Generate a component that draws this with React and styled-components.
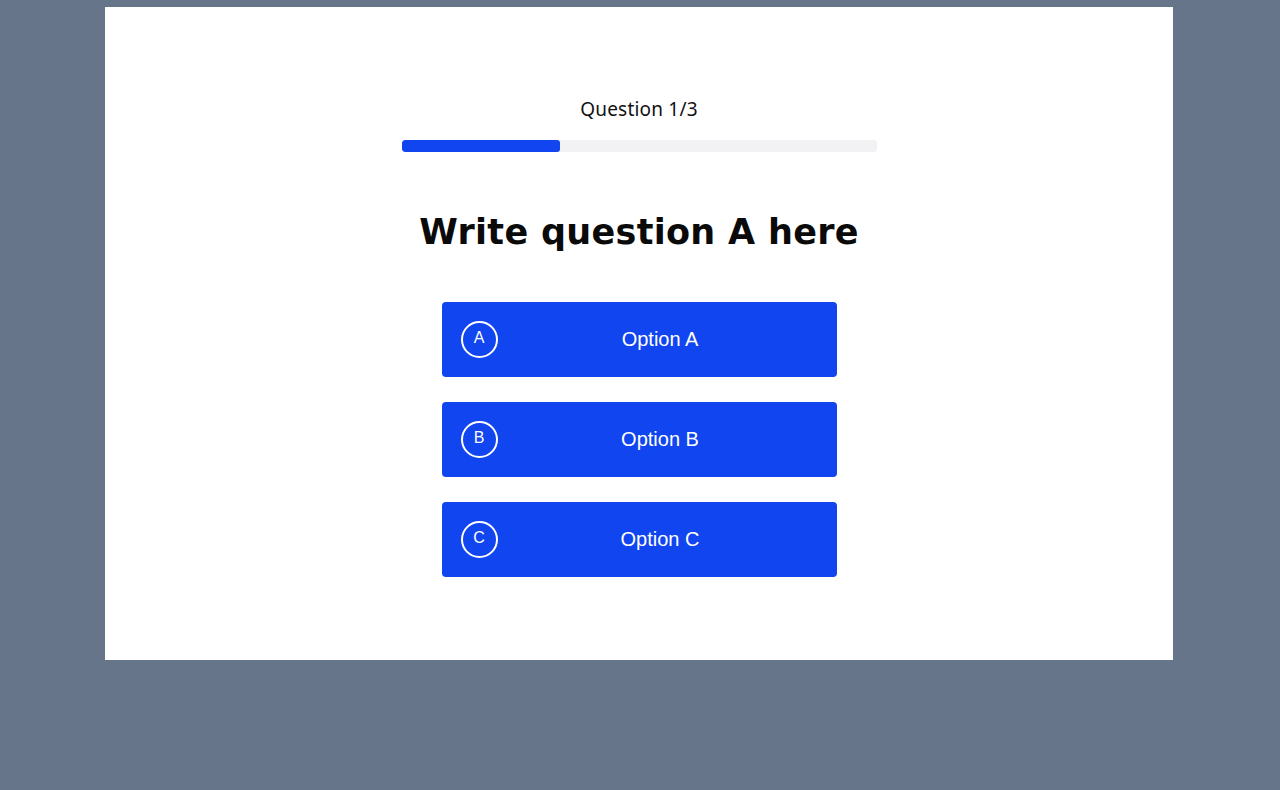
import React from 'react';
import styled, { createGlobalStyle } from 'styled-components';

const GlobalStyle = createGlobalStyle`
  html, body {
    margin: 0;
    padding: 0;
    background: #67758b;
  }
  body {
    font-family: 'Liberation Sans', Arial, sans-serif;
  }
`;

const Page = styled.div`
  min-height: 790px;
  padding: 7px 107px 0 105px;
  box-sizing: border-box;
`;

const Card = styled.main`
  background: #ffffff;
  height: 653px;
  display: flex;
  flex-direction: column;
  align-items: center;
  padding-top: 90px;
  box-sizing: border-box;
`;

const Counter = styled.div`
  font-family: 'Noto Sans', sans-serif;
  font-size: 19px;
  color: #111;
  line-height: 24px;
  letter-spacing: 0.2px;
`;

const Track = styled.div`
  width: 475px;
  height: 12px;
  margin-top: 19px;
  background: #f2f2f5;
  border-radius: 3px;
  overflow: hidden;
`;

const Fill = styled.div`
  height: 100%;
  background: #1045f0;
  border-radius: 3px;
`;

const Heading = styled.h1`
  margin: 58px 0 0;
  font-family: 'DejaVu Sans', sans-serif;
  font-weight: 700;
  font-size: 35px;
  line-height: 44px;
  color: #0a0a0a;
  letter-spacing: 0.3px;
`;

const Options = styled.div`
  margin-top: 48px;
  display: flex;
  flex-direction: column;
  gap: 25px;
`;

const OptionButton = styled.button`
  width: 395px;
  height: 75px;
  display: flex;
  align-items: center;
  padding: 0 0 0 19px;
  border: none;
  border-radius: 4px;
  background: #1045f0;
  color: #fff;
  cursor: pointer;
  font-family: 'Liberation Sans', Arial, sans-serif;
`;

const Badge = styled.span`
  flex: none;
  width: 33px;
  height: 30px;
  padding-bottom: 3px;
  border: 2px solid #fff;
  border-radius: 50%;
  display: flex;
  align-items: center;
  justify-content: center;
  font-size: 16px;
  line-height: 1;
`;

const Label = styled.span`
  flex: 1;
  text-align: center;
  font-size: 20px;
  padding-right: 14px;
`;

const options = [
  { key: 'A', label: 'Option A' },
  { key: 'B', label: 'Option B' },
  { key: 'C', label: 'Option C' },
];

export default function App() {
  const current = 1;
  const total = 3;
  return (
    <>
      <GlobalStyle />
      <Page>
        <Card>
          <Counter>Question {current}/{total}</Counter>
          <Track>
            <Fill style={{ width: `${(current / total) * 100}%` }} />
          </Track>
          <Heading>Write question A here</Heading>
          <Options>
            {options.map((o) => (
              <OptionButton key={o.key}>
                <Badge>{o.key}</Badge>
                <Label>{o.label}</Label>
              </OptionButton>
            ))}
          </Options>
        </Card>
      </Page>
    </>
  );
}
